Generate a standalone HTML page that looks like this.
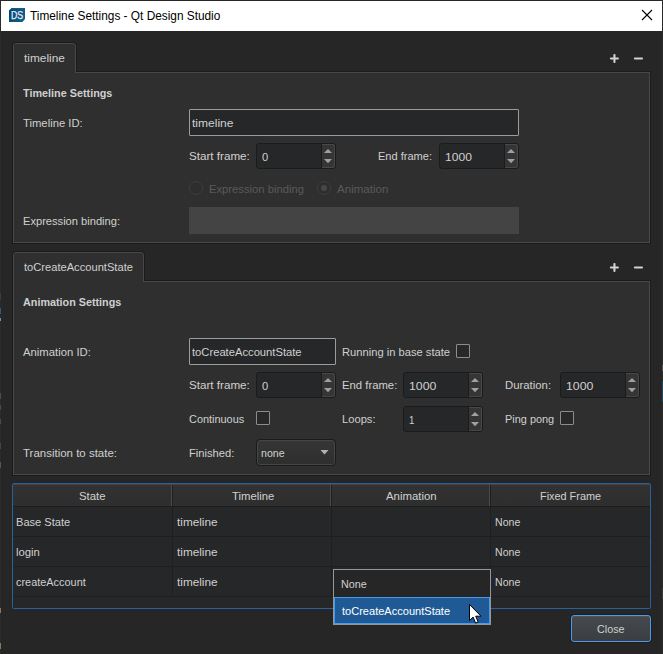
<!DOCTYPE html>
<html><head><meta charset="utf-8"><title>Timeline Settings</title>
<style>
html,body{margin:0;padding:0}
body{width:663px;height:654px;overflow:hidden;background:#262626;position:relative;font-family:"Liberation Sans",sans-serif}
.a{position:absolute;box-sizing:border-box}
.t{position:absolute;white-space:pre;line-height:16px;transform-origin:0 50%;font-family:"Liberation Sans",sans-serif}
.titlebar{left:1px;top:1px;width:661px;height:30px;background:#fff}
.panel{background:#2f2f2f;border:1px solid #1b1b1b;box-shadow:inset 0 0 0 1px #484848}
.tab{background:#2f2f2f;border:1px solid #1b1b1b;border-bottom:none;border-radius:4px 4px 0 0;box-shadow:inset 1px 0 0 #484848,inset -1px 0 0 #484848,inset 0 1px 0 #484848}
.tabj{background:#2f2f2f;border-left:1px solid #484848;border-right:1px solid #484848}
.edit{background:#262728;border:1px solid #9c9c9c;border-radius:1px}
.spin{background:#262728;border:1px solid #1b1b1b;border-radius:3px}
.spin .btn{position:absolute;right:0;top:0;bottom:0;width:13px;background:#353535;border-left:1px solid #1b1b1b;border-radius:0 3px 3px 0;box-shadow:inset -1px 0 0 #484848,inset 0 1px 0 #484848,inset 0 -1px 0 #484848}
.chk{background:#282828;border:1px solid #8c8c8c;border-radius:1px}
.combo{border:1px solid #1b1b1b;border-radius:4px;background:linear-gradient(#363636,#2e2e2e);box-shadow:inset 0 0 0 1px #464646}
.radio{border:1px solid #3f3f3f;border-radius:50%;background:#2e2e2e}
svg{position:absolute;overflow:visible}
</style></head><body>
<!-- window frame -->
<div class="a" style="left:0;top:0;width:663px;height:1px;background:#282828"></div>
<div class="a" style="left:0;top:0;width:1px;height:654px;background:#2b2b2b"></div>
<div class="a" style="left:662px;top:0;width:1px;height:654px;background:#2b2b2b"></div>
<!-- edge remnants -->
<div class="a" style="left:0;top:293px;width:1px;height:7px;background:#3c3c3c"></div>
<div class="a" style="left:0;top:308px;width:1px;height:6px;background:#2a5a8a"></div>
<div class="a" style="left:0;top:318px;width:1px;height:3px;background:#4a9ec0"></div>
<div class="a" style="left:0;top:393px;width:1px;height:6px;background:#4a5058"></div>
<div class="a" style="left:0;top:405px;width:1px;height:5px;background:#4a4a4a"></div>
<div class="a" style="left:0;top:419px;width:1px;height:5px;background:#4a4a4a"></div>
<div class="a" style="left:0;top:443px;width:1px;height:6px;background:#5a4030"></div>
<div class="a" style="left:0;top:462px;width:1px;height:6px;background:#555"></div>
<div class="a" style="left:0;top:608px;width:1px;height:5px;background:#8a7a5a"></div>
<div class="a" style="left:0;top:643px;width:1px;height:6px;background:#8a7a5a"></div>
<div class="a" style="left:662px;top:365px;width:1px;height:6px;background:#555"></div>
<div class="a" style="left:662px;top:381px;width:1px;height:21px;background:#1f4a5c"></div>
<div class="a" style="left:662px;top:588px;width:1px;height:11px;background:#3a3a3a"></div>
<div class="a titlebar"></div>
<!-- DS icon -->
<svg style="left:9px;top:8px" width="16" height="14" viewBox="0 0 16 14">
<defs><linearGradient id="g1" x1="0" y1="0" x2="1" y2="0.3"><stop offset="0" stop-color="#063a5e"/><stop offset="0.25" stop-color="#0b4b76"/><stop offset="1" stop-color="#125a8a"/></linearGradient></defs>
<polygon points="2.6,0 16,0 16,11 13.4,14 0,14 0,2.6" fill="url(#g1)"/>
<polygon points="2.6,0 16,0 14.5,1.6 1.4,1.6" fill="#17659a" opacity="0.55"/>
<text x="1.9" y="10.7" font-family="Liberation Sans" font-weight="400" font-size="10.5" fill="#e4ecf2" stroke="#e4ecf2" stroke-width="0.25" textLength="12.2" lengthAdjust="spacingAndGlyphs">DS</text>
</svg>
<!-- close X -->
<svg style="left:642px;top:10px" width="10" height="10" viewBox="0 0 10 10"><path d="M0 0L10 10M10 0L0 10" stroke="#000" stroke-width="1.1" fill="none"/></svg>

<!-- panel 1 -->
<div class="a panel" style="left:12px;top:71px;width:639px;height:173px"></div>
<div class="a tab" style="left:12px;top:42px;width:65px;height:29px"></div>
<div class="a tabj" style="left:13px;top:71px;width:63px;height:2px"></div>
<!-- plus/minus 1 -->

<div class="a edit" style="left:189px;top:109px;width:330px;height:27px"></div>
<div class="a spin" style="left:256px;top:143px;width:80px;height:26px"><div class="btn"></div></div>
<div class="a spin" style="left:439px;top:143px;width:80px;height:26px"><div class="btn"></div></div>
<div class="a radio" style="left:189px;top:181px;width:14px;height:14px"></div>
<div class="a radio" style="left:317px;top:181px;width:14px;height:14px"></div>
<div class="a" style="left:321px;top:185px;width:6px;height:6px;border-radius:50%;background:#474747"></div>
<div class="a" style="left:189px;top:207px;width:330px;height:27px;background:#444"></div>

<!-- panel 2 -->
<div class="a panel" style="left:12px;top:280px;width:639px;height:196px"></div>
<div class="a tab" style="left:12px;top:251px;width:133px;height:29px"></div>
<div class="a tabj" style="left:13px;top:280px;width:131px;height:2px"></div>

<div class="a edit" style="left:189px;top:338px;width:147px;height:27px"></div>
<div class="a chk" style="left:456px;top:344px;width:14px;height:14px"></div>
<div class="a spin" style="left:256px;top:372px;width:80px;height:26px"><div class="btn"></div></div>
<div class="a spin" style="left:403px;top:372px;width:80px;height:26px"><div class="btn"></div></div>
<div class="a spin" style="left:560px;top:372px;width:80px;height:26px"><div class="btn"></div></div>
<div class="a chk" style="left:256px;top:411px;width:14px;height:14px"></div>
<div class="a spin" style="left:403px;top:406px;width:80px;height:26px"><div class="btn"></div></div>
<div class="a chk" style="left:560px;top:411px;width:14px;height:14px"></div>
<div class="a combo" style="left:256px;top:439px;width:80px;height:27px"></div>
<svg style="left:320px;top:450px" width="9" height="5" viewBox="0 0 9 5"><polygon points="0.5,0 8.5,0 4.5,4.5" fill="#b2b2b2"/></svg>

<svg style="left:0;top:0" width="663" height="654" viewBox="0 0 663 654" fill="#d2d2d2">
<g id="pm"><rect x="609.9" y="57.4" width="9" height="2.1" rx="0.9"/><rect x="613.4" y="53.9" width="2.1" height="9" rx="0.9"/><rect x="633.9" y="57.4" width="9.1" height="2.1" rx="0.9"/></g>
<use href="#pm" x="0" y="209"/>
</svg>
<!-- spin arrows -->
<svg style="left:0;top:0" width="663" height="654" viewBox="0 0 663 654" fill="#a0a0a0">
<g id="ar"><polygon points="324,153 332,153 328,149"/><polygon points="324,159 332,159 328,163.2"/></g>
<use href="#ar" x="183" y="0"/>
<use href="#ar" x="0" y="229"/>
<use href="#ar" x="147" y="229"/>
<use href="#ar" x="304" y="229"/>
<use href="#ar" x="147" y="263"/>
</svg>

<!-- table -->
<div class="a" style="left:12px;top:483px;width:639px;height:126px;background:#262728;border:1px solid #27619f;border-radius:1.5px"></div>
<div class="a" style="left:13px;top:484px;width:637px;height:22px;background:linear-gradient(#323232,#2e2e2e)"></div>
<div class="a" style="left:13px;top:484px;width:637px;height:1px;background:#464340"></div>
<div class="a" style="left:13px;top:506px;width:637px;height:1px;background:#1c1c1c"></div>
<div class="a" style="left:13px;top:536px;width:637px;height:1px;background:#1f1f1f"></div>
<div class="a" style="left:13px;top:566px;width:637px;height:1px;background:#1f1f1f"></div>
<div class="a" style="left:13px;top:596px;width:637px;height:1px;background:#1f1f1f"></div>
<div class="a" style="left:172px;top:485px;width:1px;height:112px;background:#1f1f1f"></div>
<div class="a" style="left:331px;top:485px;width:1px;height:112px;background:#1f1f1f"></div>
<div class="a" style="left:490px;top:485px;width:1px;height:112px;background:#1f1f1f"></div>
<div class="a" style="left:171px;top:484px;width:1px;height:22px;background:#4a4a4a"></div>
<div class="a" style="left:330px;top:484px;width:1px;height:22px;background:#4a4a4a"></div>
<div class="a" style="left:489px;top:484px;width:1px;height:22px;background:#4a4a4a"></div>

<span class="t" style="left:30.15px;top:8.00px;font-size:12px;color:#000;transform:scaleX(0.9862)">Timeline Settings - Qt Design Studio</span>
<span class="t" style="left:23.87px;top:50.00px;font-size:11.5px;color:#d0d0d0;transform:scaleX(1.0308)">timeline</span>
<span class="t" style="left:23.18px;top:85.00px;font-size:11.5px;color:#d0d0d0;transform:scaleX(0.9409);font-weight:700">Timeline Settings</span>
<span class="t" style="left:23.40px;top:115.00px;font-size:11.5px;color:#d0d0d0;transform:scaleX(0.9803)">Timeline ID:</span>
<span class="t" style="left:191.67px;top:115.00px;font-size:11.5px;color:#d0d0d0;transform:scaleX(1.0462)">timeline</span>
<span class="t" style="left:189.14px;top:148.00px;font-size:11.5px;color:#d0d0d0;transform:scaleX(1.0120)">Start frame:</span>
<span class="t" style="left:261.64px;top:149.00px;font-size:11.5px;color:#d0d0d0;transform:scaleX(0.9689)">0</span>
<span class="t" style="left:378.31px;top:148.00px;font-size:11.5px;color:#d0d0d0;transform:scaleX(0.9600)">End frame:</span>
<span class="t" style="left:445.08px;top:149.00px;font-size:11.5px;color:#d0d0d0;transform:scaleX(1.0495)">1000</span>
<span class="t" style="left:208.75px;top:181.00px;font-size:11.5px;color:#5a5a5a;transform:scaleX(0.9767)">Expression binding</span>
<span class="t" style="left:336.90px;top:181.00px;font-size:11.5px;color:#5a5a5a;transform:scaleX(1.0065)">Animation</span>
<span class="t" style="left:23.05px;top:213.00px;font-size:11.5px;color:#d0d0d0;transform:scaleX(0.9665)">Expression binding:</span>
<span class="t" style="left:23.88px;top:259.00px;font-size:11.5px;color:#d0d0d0;transform:scaleX(0.9680)">toCreateAccountState</span>
<span class="t" style="left:23.07px;top:294.00px;font-size:11.5px;color:#d0d0d0;transform:scaleX(0.9380);font-weight:700">Animation Settings</span>
<span class="t" style="left:23.30px;top:344.00px;font-size:11.5px;color:#d0d0d0;transform:scaleX(0.9824)">Animation ID:</span>
<span class="t" style="left:191.78px;top:344.00px;font-size:11.5px;color:#d0d0d0;transform:scaleX(0.9739)">toCreateAccountState</span>
<span class="t" style="left:341.80px;top:344.00px;font-size:11.5px;color:#d0d0d0;transform:scaleX(0.9711)">Running in base state</span>
<span class="t" style="left:189.14px;top:377.00px;font-size:11.5px;color:#d0d0d0;transform:scaleX(1.0120)">Start frame:</span>
<span class="t" style="left:261.64px;top:378.00px;font-size:11.5px;color:#d0d0d0;transform:scaleX(0.9689)">0</span>
<span class="t" style="left:341.79px;top:377.00px;font-size:11.5px;color:#d0d0d0;transform:scaleX(0.9830)">End frame:</span>
<span class="t" style="left:408.56px;top:378.00px;font-size:11.5px;color:#d0d0d0;transform:scaleX(1.0701)">1000</span>
<span class="t" style="left:505.29px;top:377.00px;font-size:11.5px;color:#d0d0d0;transform:scaleX(0.9877)">Duration:</span>
<span class="t" style="left:565.81px;top:378.00px;font-size:11.5px;color:#d0d0d0;transform:scaleX(1.0701)">1000</span>
<span class="t" style="left:189.31px;top:411.00px;font-size:11.5px;color:#d0d0d0;transform:scaleX(0.9488)">Continuous</span>
<span class="t" style="left:341.80px;top:411.00px;font-size:11.5px;color:#d0d0d0;transform:scaleX(0.9716)">Loops:</span>
<span class="t" style="left:409.26px;top:412.00px;font-size:11.5px;color:#d0d0d0;transform:scaleX(0.8400)">1</span>
<span class="t" style="left:505.32px;top:411.00px;font-size:11.5px;color:#d0d0d0;transform:scaleX(0.9493)">Ping pong</span>
<span class="t" style="left:23.40px;top:445.00px;font-size:11.5px;color:#d0d0d0;transform:scaleX(0.9981)">Transition to state:</span>
<span class="t" style="left:189.05px;top:445.00px;font-size:11.5px;color:#d0d0d0;transform:scaleX(0.9709)">Finished:</span>
<span class="t" style="left:260.96px;top:445.00px;font-size:11.5px;color:#d0d0d0;transform:scaleX(0.9210)">none</span>
<span class="t" style="left:79.16px;top:488.00px;font-size:11.5px;color:#d0d0d0;transform:scaleX(0.9874)">State</span>
<span class="t" style="left:231.90px;top:488.00px;font-size:11.5px;color:#d0d0d0;transform:scaleX(0.9811)">Timeline</span>
<span class="t" style="left:386.40px;top:488.00px;font-size:11.5px;color:#d0d0d0;transform:scaleX(0.9916)">Animation</span>
<span class="t" style="left:540.07px;top:488.00px;font-size:11.5px;color:#d0d0d0;transform:scaleX(0.9457)">Fixed Frame</span>
<span class="t" style="left:16.31px;top:514.00px;font-size:11.5px;color:#d0d0d0;transform:scaleX(0.9649)">Base State</span>
<span class="t" style="left:176.77px;top:514.00px;font-size:11.5px;color:#d0d0d0;transform:scaleX(1.0244)">timeline</span>
<span class="t" style="left:494.90px;top:514.00px;font-size:11.5px;color:#d0d0d0;transform:scaleX(0.9187)">None</span>
<span class="t" style="left:16.41px;top:544.00px;font-size:11.5px;color:#d0d0d0;transform:scaleX(0.9814)">login</span>
<span class="t" style="left:176.77px;top:544.00px;font-size:11.5px;color:#d0d0d0;transform:scaleX(1.0244)">timeline</span>
<span class="t" style="left:494.90px;top:544.00px;font-size:11.5px;color:#d0d0d0;transform:scaleX(0.9187)">None</span>
<span class="t" style="left:16.13px;top:574.00px;font-size:11.5px;color:#d0d0d0;transform:scaleX(0.9486)">createAccount</span>
<span class="t" style="left:176.77px;top:574.00px;font-size:11.5px;color:#d0d0d0;transform:scaleX(1.0244)">timeline</span>
<span class="t" style="left:494.90px;top:574.00px;font-size:11.5px;color:#d0d0d0;transform:scaleX(0.9187)">None</span>

<!-- popup -->
<div class="a" style="left:333px;top:569px;width:158px;height:56px;background:#262626;border:1px solid #969696"></div>
<div class="a" style="left:334px;top:597px;width:156px;height:27px;background:#205a96;border:1px solid #479be8"></div>
<!-- close button -->
<div class="a" style="left:571px;top:615px;width:80px;height:27px;border:1px solid #4b9bea;border-radius:3px;background:linear-gradient(#464a4f,#3a3e42);box-shadow:0 0 0 1px #1e1e1e,inset 0 1px 0 #4f5357"></div>

<span class="t" style="left:341.08px;top:576.00px;font-size:11.5px;color:#d0d0d0;transform:scaleX(0.9359)">None</span>
<span class="t" style="left:341.78px;top:602.50px;font-size:11.5px;color:#ffffff;transform:scaleX(0.9604)">toCreateAccountState</span>
<span class="t" style="left:597.42px;top:621.00px;font-size:11.5px;color:#d0d0d0;transform:scaleX(0.9345)">Close</span>

<!-- cursor -->
<svg style="left:469px;top:604px" width="13" height="20" viewBox="0 0 13 20"><path d="M0.5 0.5 L0.5 16.6 L4.1 13.1 L6.6 19.1 L9.2 18 L6.7 12.2 L12 12.2 Z" fill="#fff" stroke="#000" stroke-width="1" stroke-linejoin="miter"/></svg>
</body></html>
